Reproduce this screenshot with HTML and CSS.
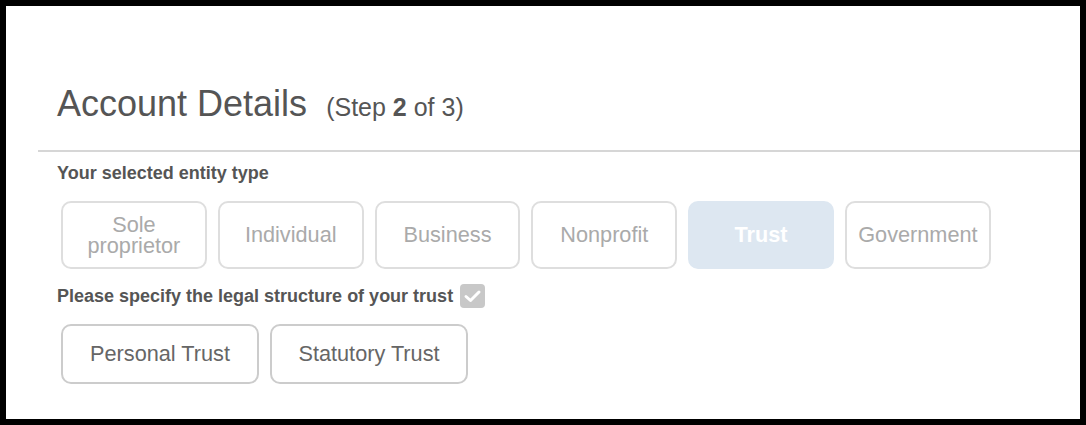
FILE: index.html
```html
<!DOCTYPE html>
<html>
<head>
<meta charset="utf-8">
<link rel="stylesheet" href="styles.css">
</head>
<body>
<div class="frame">
  <div class="header">
    <h1 class="title">Account Details</h1>
    <span class="step">(Step <b>2</b> of 3)</span>
  </div>
  <div class="rule"></div>
  <div class="content">
    <div class="label">Your selected entity type</div>
    <div class="options">
      <div class="opt disabled two-line"><span class="line">Sole</span><span class="line">proprietor</span></div>
      <div class="opt disabled">Individual</div>
      <div class="opt disabled">Business</div>
      <div class="opt disabled">Nonprofit</div>
      <div class="opt selected">Trust</div>
      <div class="opt disabled">Government</div>
    </div>
    <div class="label label-check">Please specify the legal structure of your trust
      <span class="check"><svg width="25" height="24" viewBox="0 0 25 24"><path d="M6 12.5 L10.5 16.5 L19 8" fill="none" stroke="#fff" stroke-width="3" stroke-linecap="round" stroke-linejoin="round"/></svg></span>
    </div>
    <div class="options options-second">
      <div class="opt wide">Personal Trust</div>
      <div class="opt wide">Statutory Trust</div>
    </div>
  </div>
</div>
</body>
</html>
```
FILE: styles.css
```css
html, body {
  margin: 0;
  padding: 0;
  background: #000;
}
body {
  font-family: "Liberation Sans", Arial, sans-serif;
}
.frame {
  margin: 6px;
  height: 413px;
  background: #fff;
  box-sizing: border-box;
  padding-top: 78px;
  padding-left: 32px;
}
.header {
  display: flex;
  align-items: baseline;
  padding-left: 19px;
  height: 44px;
}
.title {
  margin: 0;
  font-size: 36px;
  font-weight: normal;
  color: #555;
  line-height: 40px;
}
.step {
  font-size: 25px;
  color: #555;
  margin-left: 19px;
}
.step b {
  font-weight: bold;
}
.rule {
  margin-top: 22px;
  height: 2px;
  background: #d6d6d6;
}
.content {
  padding-left: 19px;
  padding-top: 10px;
}
.label {
  font-size: 18px;
  font-weight: bold;
  color: #555;
  line-height: 22px;
}
.label-check {
  display: flex;
  align-items: center;
  gap: 7px;
  margin-top: 15px;
}
.check {
  width: 25px;
  height: 24px;
  border-radius: 4px;
  background: #c8c8c8;
  display: flex;
  align-items: center;
  justify-content: center;
}
.options {
  display: flex;
  gap: 11px;
  margin-top: 17px;
  padding-left: 4px;
}
.options-second {
  margin-top: 16px;
}
.opt {
  width: 145.8px;
  height: 68px;
  box-sizing: border-box;
  border: 2px solid #dedede;
  border-radius: 10px;
  display: flex;
  align-items: center;
  justify-content: center;
  text-align: center;
  font-size: 21.7px;
  line-height: 20px;
  color: #666;
}
.opt.two-line {
  flex-direction: column;
  line-height: 21px;
}
.opt.two-line .line {
  display: block;
}
.opt.disabled {
  color: #aaa;
}
.opt.selected {
  border-color: #dde7f1;
  background: #dde7f1;
  color: #fff;
  font-weight: bold;
}
.opt.wide {
  width: 198px;
  height: 60px;
  border-color: #ccc;
  color: #666;
}
```
